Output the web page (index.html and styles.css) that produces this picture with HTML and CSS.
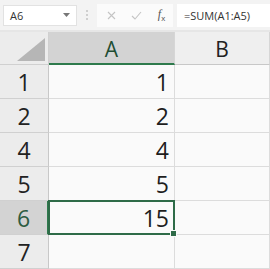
FILE: index.html
```html
<!DOCTYPE html>
<html lang="en">
<head>
  <meta charset="UTF-8">
  <title>Sheet</title>
  <link rel="stylesheet" href="styles.css">
</head>
<body>
  <!-- Formula bar -->
  <div class="bar">
    <div class="namebox">
      <span>A6</span>
      <svg class="caret" width="7" height="4" viewBox="0 0 7 4"><path d="M0 0h7L3.5 4z" fill="#777"/></svg>
    </div>
    <div class="grip"><i></i><i></i><i></i></div>
    <div class="tools">
      <svg width="9" height="9" viewBox="0 0 9 9"><path d="M1 1l7 7M8 1L1 8" stroke="#c4c4c4" stroke-width="1.1"/></svg>
      <svg width="11" height="9" viewBox="0 0 11 9"><path d="M1 5l3 3 6-7" stroke="#c4c4c4" stroke-width="1.1" fill="none"/></svg>
      <span class="fx"><i>f</i><sub>x</sub></span>
    </div>
    <div class="formula">=SUM(A1:A5)</div>
  </div>

  <!-- Grid -->
  <div class="sheet">
    <div class="corner"><svg width="28" height="23" viewBox="0 0 28 23"><path d="M28 0V23H0z" fill="#b6b6b6"/></svg></div>
    <div class="colhead sel">A</div>
    <div class="colhead">B</div>

    <div class="rowhead">1</div><div class="cell">1</div><div class="cell"></div>
    <div class="rowhead">2</div><div class="cell">2</div><div class="cell"></div>
    <div class="rowhead">4</div><div class="cell">4</div><div class="cell"></div>
    <div class="rowhead">5</div><div class="cell">5</div><div class="cell"></div>
    <div class="rowhead sel">6</div><div class="cell active">15</div><div class="cell"></div>
    <div class="rowhead">7</div><div class="cell"></div><div class="cell"></div>
  </div>
</body>
</html>
```

FILE: styles.css
```css
body {
  margin: 0;
  background: #f2f2f2;
  font-family: "Open Sans", "Noto Sans", sans-serif;
  color: #222;
  width: 270px;
  height: 269px;
  overflow: hidden;
}
.bar {
  height: 30px;
  display: flex;
  align-items: center;
  background: #f3f3f3;
  border-bottom: 2px solid #e6e6e6;
}
.namebox {
  margin-left: 3px;
  width: 74px;
  height: 21px;
  box-sizing: border-box;
  background: #fff;
  border: 1px solid #e2e2e2;
  display: flex;
  align-items: center;
  justify-content: space-between;
  padding: 0 6px 0 6px;
  font-size: 11px;
  color: #333;
}
.grip {
  width: 20px;
  display: flex;
  flex-direction: column;
  align-items: center;
  gap: 2px;
}
.grip i {
  width: 2px;
  height: 2px;
  background: #cfcfcf;
}
.tools {
  width: 76px;
  height: 23px;
  background: #fbfbfb;
  display: flex;
  align-items: center;
  justify-content: space-around;
  padding-left: 2px;
  box-sizing: border-box;
}
.fx {
  font-family: "Liberation Serif", serif;
  font-size: 12px;
  color: #555;
}
.fx sub {
  font-size: 8px;
  font-family: "Liberation Sans", sans-serif;
}
.formula {
  margin-left: 4px;
  flex: 1;
  height: 23px;
  background: #fff;
  display: flex;
  align-items: center;
  padding-left: 7px;
  font-size: 11px;
  color: #333;
}
.sheet {
  display: grid;
  grid-template-columns: 49px 126px 1fr;
  grid-template-rows: 33px repeat(6, 34px);
  background: #fafafa;
}
.corner {
  background: #ececec;
  border-right: 1px solid #d0d0d0;
  border-bottom: 1px solid #d0d0d0;
  display: flex;
  align-items: flex-end;
  justify-content: flex-end;
  padding: 0 3px 3px 0;
}
.colhead {
  background: #efefef;
  border-right: 1px solid #d6d6d6;
  border-bottom: 1px solid #c8c8c8;
  display: flex;
  align-items: center;
  justify-content: center;
  font-size: 21px;
  padding-top: 2px;
}
.colhead.sel {
  background: #d3d3d3;
  color: #1f4e33;
  border-bottom: 2px solid #2e7a4c;
}
.rowhead {
  background: #ececec;
  border-right: 1px solid #c8c8c8;
  border-bottom: 1px solid #d0d0d0;
  display: flex;
  align-items: center;
  justify-content: center;
  font-size: 23px;
}
.rowhead.sel {
  background: #d3d3d3;
  color: #2d5c42;
  border-right: 2px solid #2e7a4c;
}
.cell {
  border-right: 1px solid #dcdcdc;
  border-bottom: 1px solid #dcdcdc;
  display: flex;
  align-items: center;
  justify-content: flex-end;
  padding-right: 5px;
  font-size: 23px;
  color: #1e1e1e;
}
.cell.active {
  position: relative;
  border: 2px solid #2e6b48;
  margin: -1px 0 0 -1px;
  padding-right: 4px;
}
.cell.active::after {
  content: "";
  position: absolute;
  right: -4px;
  bottom: -4px;
  width: 5px;
  height: 5px;
  background: #2e6b48;
  border: 1px solid #fafafa;
}
```
